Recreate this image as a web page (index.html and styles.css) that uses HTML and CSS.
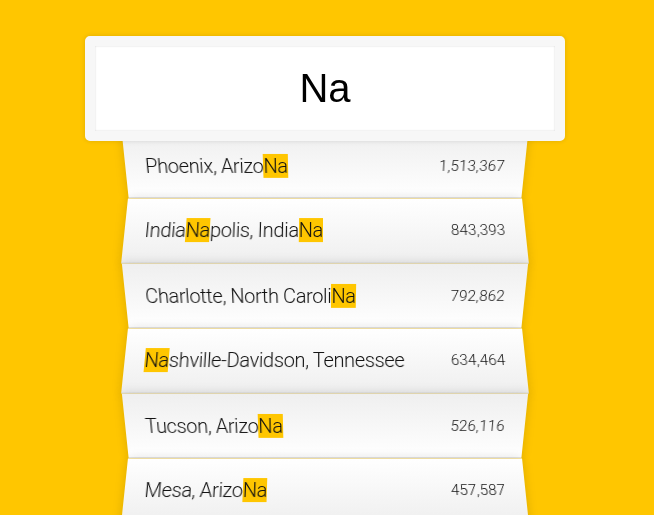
FILE: index.html
```html
<!DOCTYPE html>
<html lang="en">
<head>
<meta charset="UTF-8">
<title>Type Ahead</title>
<link rel="stylesheet" href="styles.css">
</head>
<body>
<form class="search-form">
  <input type="text" class="search" placeholder="City or State" value="Na">
  <ul class="suggestions">
    <li><span class="name">Phoenix, Arizo<span class="hl">Na</span></span><span class="population">1,513,367</span></li>
    <li><span class="name">India<span class="hl">Na</span>polis, India<span class="hl">Na</span></span><span class="population">843,393</span></li>
    <li><span class="name">Charlotte, North Caroli<span class="hl">Na</span></span><span class="population">792,862</span></li>
    <li><span class="name"><span class="hl">Na</span>shville-Davidson, Tennessee</span><span class="population">634,464</span></li>
    <li><span class="name">Tucson, Arizo<span class="hl">Na</span></span><span class="population">526,116</span></li>
    <li><span class="name">Mesa, Arizo<span class="hl">Na</span></span><span class="population">457,587</span></li>
  </ul>
</form>
</body>
</html>
```
FILE: styles.css
```css
html {
  box-sizing: border-box;
  background: #ffc600;
  font-family: Roboto, "Liberation Sans", sans-serif;
  font-size: 20px;
  font-weight: 300;
}
*, *::before, *::after {
  box-sizing: inherit;
}
body {
  margin: 0;
  padding: 0 4px 0 0;
}
.search-form {
  max-width: 400px;
  margin: 36px auto 0;
}
.search {
  display: block;
  position: relative;
  z-index: 2;
  width: 480px;
  margin: 0 -40px -10px;
  padding: 20px;
  height: 105px;
  line-height: 45px;
  text-align: center;
  outline: 0;
  border: 10px solid #f7f7f7;
  border-radius: 5px;
  font-family: "Liberation Sans", Arial, sans-serif;
  font-size: 40px;
  font-weight: 400;
  color: #000;
  background: #fff;
  box-shadow: 0 0 5px rgba(0, 0, 0, 0.12), inset 0 0 2px rgba(0, 0, 0, 0.19);
}
.suggestions {
  margin: 0;
  padding: 0;
  position: relative;
}
.suggestions li {
  list-style: none;
  border-bottom: 1px solid #d8d8d8;
  box-shadow: 0 0 10px rgba(0, 0, 0, 0.14);
  margin: 0;
  padding: 20px;
  line-height: 24px;
  display: flex;
  justify-content: space-between;
  color: #111;
}
.suggestions li:nth-child(even) {
  transform: perspective(100px) rotateX(3deg) translateY(2px) scale(1.001);
  background: linear-gradient(to bottom, #ffffff 0%, #efefef 100%);
}
.suggestions li:nth-child(odd) {
  transform: perspective(100px) rotateX(-3deg) translateY(3px);
  background: linear-gradient(to top, #ffffff 0%, #efefef 100%);
}
.name {
  letter-spacing: -0.35px;
}
.population {
  font-size: 15px;
  letter-spacing: 0.2px;
}
.hl {
  background: #ffc600;
}
```
